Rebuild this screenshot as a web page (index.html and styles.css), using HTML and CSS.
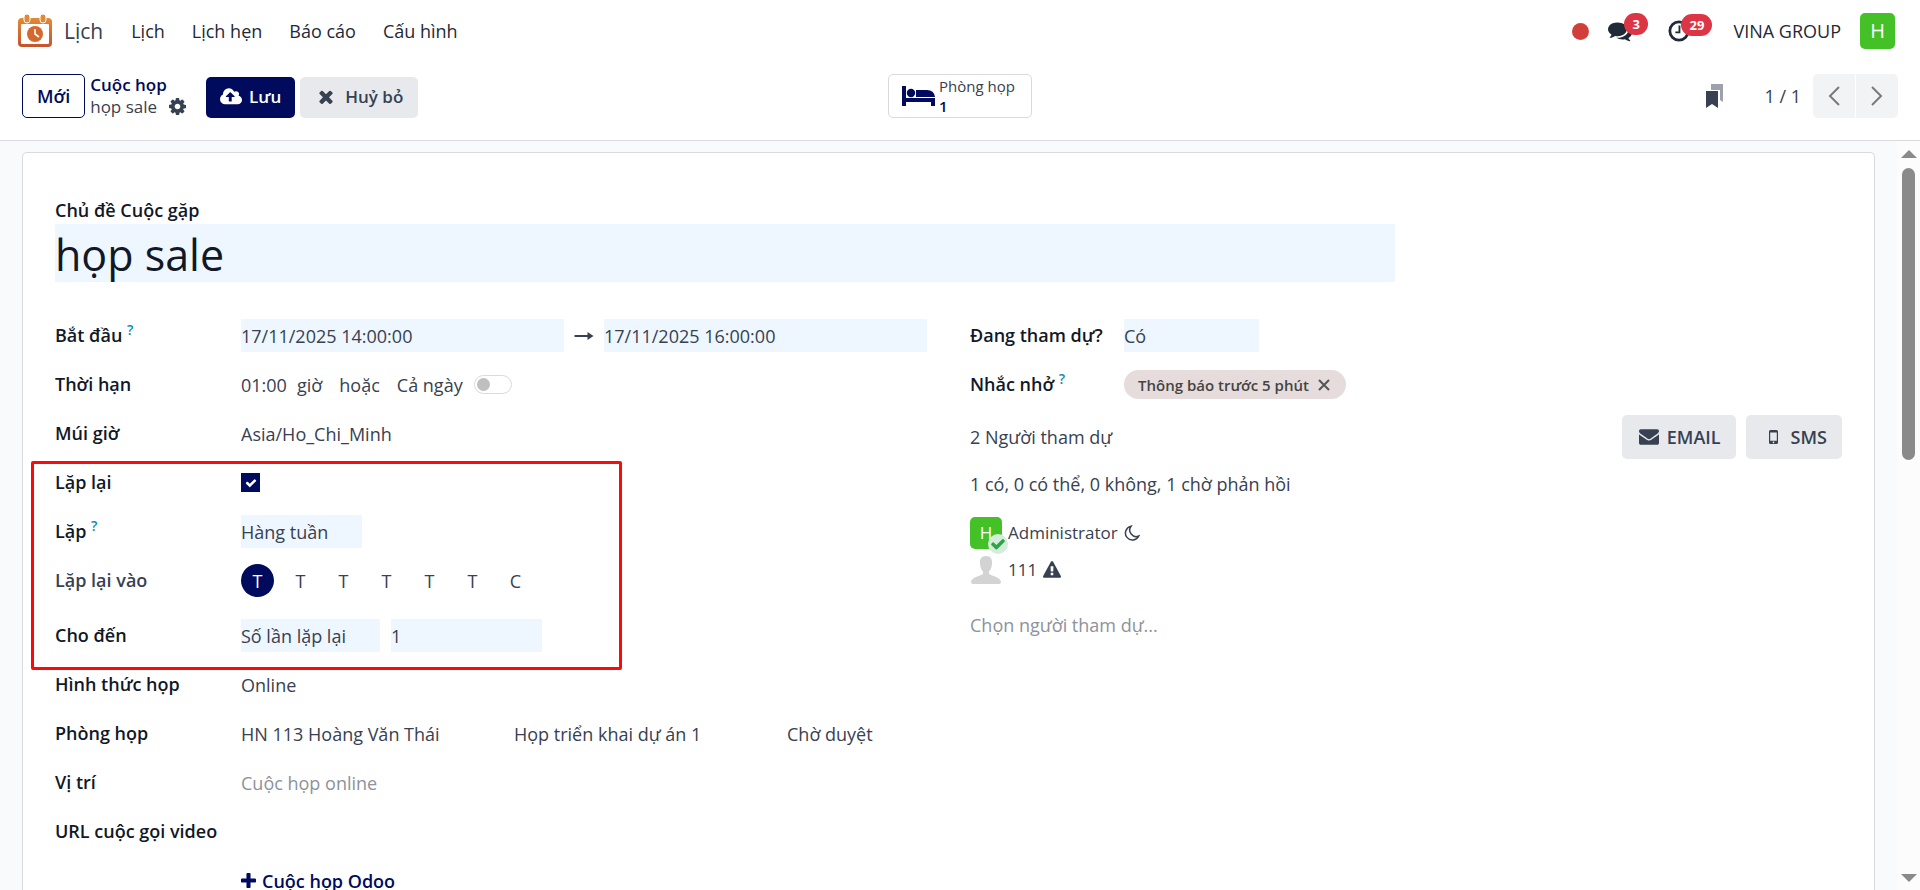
FILE: index.html
```
<!DOCTYPE html>
<html lang="vi">
<head>
  <meta charset="UTF-8">
  <title>Lịch - họp sale</title>
  <link rel="stylesheet" href="styles.css">
</head>

<body>

  <header class="navbar">
    <a href="#" class="brand">
      <svg class="brand-logo" viewBox="0 0 34 34">
        <defs>
          <linearGradient id="logo-fill" x1="0" y1="0" x2="0" y2="1">
            <stop offset="0" stop-color="#e08a35"/>
            <stop offset="1" stop-color="#c4532e"/>
          </linearGradient>
        </defs>
        <rect x="0" y="4" width="34" height="29" rx="4" fill="url(#logo-fill)"/>
        <rect x="3" y="10" width="28" height="20" rx="1" fill="#fff"/>
        <rect x="6" y="0" width="6" height="9" rx="3" fill="#e08a35" stroke="#fff"/>
        <rect x="22" y="0" width="6" height="9" rx="3" fill="#e08a35" stroke="#fff"/>
        <circle cx="17" cy="20" r="8" fill="#d4682f"/>
        <path d="M17 15v5l4 3" fill="none" stroke="#fff" stroke-width="1.6"/>
      </svg>
      <span>Lịch</span>
    </a>
    <nav class="menu">
      <a href="#">Lịch</a>
      <a href="#">Lịch hẹn</a>
      <a href="#">Báo cáo</a>
      <a href="#">Cấu hình</a>
    </nav>
    <div class="systray">
      <span class="status-dot"></span>
      <button class="tray-btn tray-chat" aria-label="Tin nhắn">
        <svg viewBox="0 0 1792 1792"><path d="M1408 768q0 139-94 257t-256.500 186.500-353.500 68.500q-86 0-176-16-124 88-278 128-36 9-86 16h-3q-11 0-20.500-8t-11.500-21q-1-3-1-6.500t.5-6.500 2-6l2.500-5 3.500-5.500 4-5 4.500-5 4-4.500q5-6 23-25t26-29.500 22.500-29 25-38.500 20.500-44q-124-72-195-177t-71-224q0-139 94-257t256.500-186.500 353.500-68.500 353.500 68.500 256.500 186.500 94 257zm384 256q0 120-71 224.500t-195 176.500q10 24 20.500 44t25 38.500 22.500 29 26 29.500 23 25q1 1 4 4.500t4.500 5 4 5 3.500 5.500l2.500 5 2 6 .5 6.500-1 6.500q-3 14-13 22t-22 7q-50-7-86-16-154-40-278-128-90 16-176 16-271 0-472-132 58 4 88 4 161 0 309-45t264-129q125-92 192-212t67-254q0-77-23-152 129 71 204 178t75 230z"/></svg>
        <span class="badge">3</span>
      </button>
      <button class="tray-btn tray-clock" aria-label="Hoạt động">
        <svg viewBox="0 0 24 24"><circle cx="12" cy="12" r="10" fill="none" stroke="currentColor" stroke-width="3"/><path d="M12.500 6v7.500H8" fill="none" stroke="currentColor" stroke-width="2"/></svg>
        <span class="badge">29</span>
      </button>
      <span class="company">VINA GROUP</span>
      <button class="user-avatar">H</button>
    </div>
  </header>

  <div class="control-panel">
    <div class="cp-left">
      <button class="btn btn-outline">Mới</button>
      <div class="breadcrumb">
        <a href="#">Cuộc họp</a>
        <div class="breadcrumb-current">
          <span>họp sale</span>
          <svg class="icon-gear" viewBox="128 128 1536 1536"><path d="M1152 896q0-106-75-181t-181-75-181 75-75 181 75 181 181 75 181-75 75-181zm512-109v222q0 12-8 23t-20 13l-185 28q-19 54-39 91 35 50 107 138 10 12 10 25t-9 23q-27 37-99 108t-94 71q-12 0-26-9l-138-108q-44 23-91 38-16 136-29 186-7 28-36 28h-222q-14 0-24.500-8.500t-11.500-21.500l-28-184q-49-16-90-37l-141 107q-10 9-25 9-14 0-25-11-126-114-165-168-7-10-7-23 0-12 8-23 15-21 51-66.500t54-70.500q-27-50-41-99l-183-27q-13-2-21-12.500t-8-23.500v-222q0-12 8-23t19-13l186-28q14-46 39-92-40-57-107-138-10-12-10-24 0-10 9-23 26-36 98.500-107.500t94.500-71.500q13 0 26 10l138 107q44-23 91-38 16-136 29-186 7-28 36-28h222q14 0 24.500 8.500t11.500 21.500l28 184q49 16 90 37l142-107q9-9 24-9 13 0 25 10 129 119 165 170 7 8 7 22 0 12-8 23-15 21-51 66.500t-54 70.500q26 50 41 98l183 28q13 2 21 12.500t8 23.500z"/></svg>
        </div>
      </div>
      <div class="form-actions">
        <button class="btn btn-primary">
          <svg class="icon-cloud" viewBox="-64 128 1920 1536"><path d="M1216 864q0-14-9-23l-352-352q-9-9-23-9t-23 9l-351 351q-10 12-10 24 0 14 9 23t23 9h224v352q0 13 9.500 22.500t22.500 9.500h192q13 0 22.500-9.500t9.500-22.500v-352h224q13 0 22.500-9.500t9.500-22.500zm640 288q0 159-112.500 271.500t-271.500 112.500h-1088q-185 0-316.500-131.500t-131.500-316.500q0-130 70-240t188-165q-2-30-2-43 0-212 150-362t362-150q156 0 285.500 87t188.500 231q71-62 166-62 106 0 181 75t75 181q0 76-41 138 130 31 213.500 135.500t83.500 238.500z"/></svg>
          Lưu
        </button>
        <button class="btn btn-light btn-discard">
          <svg class="icon-times" viewBox="302 302 1188 1252"><path d="M1490 1322q0 40-28 68l-136 136q-28 28-68 28t-68-28l-294-294-294 294q-28 28-68 28t-68-28l-136-136q-28-28-28-68t28-68l294-294-294-294q-28-28-28-68t28-68l136-136q28-28 68-28t68 28l294 294 294-294q28-28 68-28t68 28l136 136q28 28 28 68t-28 68l-294 294 294 294q28 28 28 68z"/></svg>
          Huỷ bỏ
        </button>
      </div>
    </div>

    <button class="stat-button">
      <svg class="icon-bed" viewBox="0 0 33 20"><path d="M0 0h4v12h29v8h-4v-4H4v4H0z"/><circle cx="9" cy="7" r="4.200"/><path d="M14 4h11q7 0 8 7H14z"/></svg>
      <span class="stat-text">
        <span>Phòng họp</span>
        <strong>1</strong>
      </span>
    </button>

    <div class="cp-right">
      <svg class="icon-bookmark" viewBox="0 0 18 24"><path d="M5 0h12v18l-3-2V6H5z" fill="#9ca1ac"/><path d="M0 7h12v17l-6-4-6 4z"/></svg>
      <span class="pager-count">1 / 1</span>
      <div class="pager">
        <button aria-label="Trước"><svg viewBox="0 0 12 20"><path d="M11 1L2 10l9 9"/></svg></button>
        <button aria-label="Sau"><svg viewBox="0 0 12 20"><path d="M1 1l9 9-9 9"/></svg></button>
      </div>
    </div>
  </div>

  <div class="content">
    <main class="sheet">
      <label class="title-label" for="subject">Chủ đề Cuộc gặp</label>
      <input class="title-input" id="subject" type="text" value="họp sale">

      <div class="columns">
        <div class="col">
          <div class="row">
            <label for="start">Bắt đầu <sup>?</sup></label>
            <div class="date-range">
              <input class="field" id="start" type="text" value="17/11/2025 14:00:00">
              <svg class="icon-arrow" viewBox="0 0 19 10"><path d="M0 4h13V1l6 4-6 4V6H0z"/></svg>
              <input class="field" type="text" value="17/11/2025 16:00:00" aria-label="Kết thúc">
            </div>
          </div>
          <div class="row">
            <label for="duration">Thời hạn</label>
            <div class="duration">
              <input class="plain" id="duration" type="text" value="01:00">
              <span class="unit">giờ</span>
              <span class="or">hoặc</span>
              <label for="allday">Cả ngày</label>
              <input class="switch" id="allday" type="checkbox">
            </div>
          </div>
          <div class="row">
            <label for="timezone">Múi giờ</label>
            <input class="plain" id="timezone" type="text" value="Asia/Ho_Chi_Minh">
          </div>

          <div class="recurrence">
            <div class="row">
              <label for="recurring">Lặp lại</label>
              <span class="tick-box">
                <input id="recurring" type="checkbox" checked>
                <svg viewBox="0 0 1792 1792"><path d="M1671 566q0 40-28 68l-724 724-136 136q-28 28-68 28t-68-28l-136-136-362-362q-28-28-28-68t28-68l136-136q28-28 68-28t68 28l294 295 656-657q28-28 68-28t68 28l136 136q28 28 28 68z"/></svg>
              </span>
            </div>
            <div class="row">
              <label for="repeat">Lặp <sup>?</sup></label>
              <select class="field field-repeat" id="repeat"><option>Hàng tuần</option></select>
            </div>
            <div class="row row-days">
              <span class="row-name">Lặp lại vào</span>
              <div class="days">
                <button class="active">T</button>
                <button>T</button>
                <button>T</button>
                <button>T</button>
                <button>T</button>
                <button>T</button>
                <button>C</button>
              </div>
            </div>
            <div class="row">
              <label for="until">Cho đến</label>
              <div class="until">
                <select class="field field-until" id="until"><option>Số lần lặp lại</option></select>
                <input class="field field-count" type="text" value="1" aria-label="Số lần">
              </div>
            </div>
          </div>

          <div class="row">
            <label for="meeting-type">Hình thức họp</label>
            <select class="plain" id="meeting-type"><option>Online</option></select>
          </div>
          <div class="row">
            <span class="row-name strong">Phòng họp</span>
            <div class="room">
              <span>HN 113 Hoàng Văn Thái</span>
              <span>Họp triển khai dự án 1</span>
              <span>Chờ duyệt</span>
            </div>
          </div>
          <div class="row">
            <label for="location">Vị trí</label>
            <input class="plain" id="location" type="text" placeholder="Cuộc họp online">
          </div>
          <div class="row">
            <label for="video-url">URL cuộc gọi video</label>
            <input class="plain" id="video-url" type="text">
          </div>
          <div class="row">
            <span></span>
            <a href="#" class="odoo-link">
              <svg viewBox="192 128 1408 1408"><path d="M1600 736v192q0 40-28 68t-68 28h-416v416q0 40-28 68t-68 28h-192q-40 0-68-28t-28-68v-416h-416q-40 0-68-28t-28-68v-192q0-40 28-68t68-28h416v-416q0-40 28-68t68-28h192q40 0 68 28t28 68v416h416q40 0 68 28t28 68z"/></svg>
              Cuộc họp Odoo
            </a>
          </div>
        </div>

        <div class="col col-right">
          <div class="row">
            <label for="attending">Đang tham dự?</label>
            <select class="field field-attending" id="attending"><option>Có</option></select>
          </div>
          <div class="row">
            <span class="row-name strong">Nhắc nhở <sup>?</sup></span>
            <span class="tag">
              Thông báo trước 5 phút
              <button aria-label="Xoá"><svg viewBox="0 0 12 12"><path d="M1 1l10 10M11 1L1 11"/></svg></button>
            </span>
          </div>
          <div class="attendee-bar">
            <span>2 Người tham dự</span>
            <div class="attendee-actions">
              <button class="btn btn-light">
                <svg class="icon-mail" viewBox="0 256 1792 1408"><path d="M1792 710v794q0 66-47 113t-113 47h-1472q-66 0-113-47t-47-113v-794q44 49 101 87 362 246 497 345 57 42 92.500 65.500t94.500 48 110 24.500h2q51 0 110-24.500t94.500-48 92.500-65.500q170-123 498-345 57-39 100-87zm0-294q0 79-49 151t-122 123q-376 261-468 325-10 7-42.500 31t-54 38-52 31.500-57.500 27-50 9h-2q-23 0-50-9t-57.500-27-52-31.500-54-38-42.500-31q-91-64-262-182.500t-205-142.500q-62-42-117-115.500t-55-136.500q0-78 41.500-130t118.500-52h1472q65 0 112.500 47t47.500 113z"/></svg>
                EMAIL
              </button>
              <button class="btn btn-light btn-sms">
                <svg class="icon-phone" viewBox="0 0 9 14"><path fill-rule="evenodd" d="M1.500 0h6Q9 0 9 1.500v11Q9 14 7.500 14h-6Q0 14 0 12.500v-11Q0 0 1.500 0zM1.200 2.500v8.300h6.600V2.500zM4.500 11.600a.8.8 0 1 0 .01 0z"/></svg>
                SMS
              </button>
            </div>
          </div>
          <p class="summary">1 có, 0 có thể, 0 không, 1 chờ phản hồi</p>
          <ul class="attendees">
            <li>
              <span class="avatar">H
                <span class="accepted"><svg viewBox="0 0 1792 1792"><path d="M1671 566q0 40-28 68l-724 724-136 136q-28 28-68 28t-68-28l-136-136-362-362q-28-28-28-68t28-68l136-136q28-28 68-28t68 28l294 295 656-657q28-28 68-28t68 28l136 136q28 28 28 68z"/></svg></span>
              </span>
              <span>Administrator</span>
              <svg class="icon-moon" viewBox="0 0 16 16"><path d="M7 1.200A7 7 0 1 0 14.800 11 6.500 6.500 0 0 1 7 1.200z"/></svg>
            </li>
            <li>
              <svg class="avatar-empty" viewBox="0 0 32 28"><path d="M16 0c5 0 6.500 3.500 6 8-.3 3.500-1.500 6-3 7.500V18c3 2 12 3.500 12 8q0 2-2 2H3q-2 0-2-2c0-4.500 9-6 12-8v-2.500c-1.500-1.500-2.700-4-3-7.500-.5-4.500 1-8 6-8z"/></svg>
              <span>111</span>
              <svg class="icon-warning" viewBox="0 0 1792 1664"><path d="M1024 1375v-190q0-14-9.500-23.500t-22.500-9.500h-192q-13 0-22.500 9.500t-9.500 23.500v190q0 14 9.500 23.500t22.500 9.500h192q13 0 22.500-9.500t9.500-23.500zm-2-374l18-459q0-12-10-19-13-11-24-11h-220q-11 0-24 11-10 7-10 21l17 457q0 10 10 16.500t24 6.500h185q14 0 23.500-6.500t10.500-16.500zm-14-934l768 1408q35 63-2 126-17 29-46.500 46t-63.500 17h-1536q-34 0-63.500-17t-46.500-46q-37-63-2-126l768-1408q17-31 47-49t65-18 65 18 47 49z"/></svg>
            </li>
          </ul>
          <input class="plain attendee-search" type="text" placeholder="Chọn người tham dự..." aria-label="Chọn người tham dự">
        </div>
      </div>
    </main>

    <div class="scrollbar">
      <svg viewBox="0 0 16 8"><path d="M8 0l8 8H0z"/></svg>
      <div class="track"><div class="thumb"></div></div>
      <svg viewBox="0 0 16 8"><path d="M0 0h16L8 8z"/></svg>
    </div>
  </div>

</body>
</html>
```
FILE: styles.css
```
*, *::before, *::after {
  box-sizing: border-box;
}

body {
  margin: 0;
  height: 100vh;
  display: flex;
  flex-direction: column;
  overflow: hidden;
  font-family: "Open Sans", "Noto Sans", sans-serif;
  font-size: 18px;
  line-height: 24px;
  color: #374151;
  background-color: #fff;
}

a {
  color: inherit;
  text-decoration: none;
}

button, input, select {
  font: inherit;
  color: inherit;
  margin: 0;
  padding: 0;
  border: none;
  border-radius: 0;
  background: none;
  appearance: none;
}

button {
  cursor: pointer;
}

svg {
  display: block;
  flex: none;
  fill: currentColor;
}

/* navbar */
.navbar {
  display: flex;
  align-items: center;
  height: 62px;
  padding: 0 25px 0 18px;
  color: #1f2937;
}

.brand {
  display: flex;
  align-items: center;
  gap: 12px;
  font-size: 21px;
  color: #374151;
}

.brand-logo {
  width: 34px;
  height: 34px;
}

.menu {
  display: flex;
  gap: 27px;
  margin-left: 28px;
}

.systray {
  display: flex;
  align-items: center;
  margin-left: auto;
}

.status-dot {
  width: 17px;
  height: 17px;
  margin-right: 19px;
  border-radius: 50%;
  background-color: #d23f3a;
}

.tray-btn {
  position: relative;
}

.tray-btn svg {
  width: 24px;
  height: 24px;
}

.tray-clock svg {
  width: 22px;
  height: 22px;
}

.tray-chat {
  margin-right: 36px;
}

.tray-clock {
  margin-right: 43px;
}

.badge {
  position: absolute;
  left: 16px;
  top: -6px;
  height: 22px;
  padding: 0 8px;
  border-radius: 11px;
  font-size: 13px;
  font-weight: 700;
  line-height: 22px;
  color: #fff;
  background-color: #dc3545;
}

.tray-clock .badge {
  left: 13px;
}

.company {
  margin-right: 19px;
}

.user-avatar {
  width: 35px;
  height: 36px;
  border-radius: 5px;
  font-size: 20px;
  color: #fff;
  background-color: #43c127;
}

/* control panel */
.control-panel {
  display: grid;
  grid-template-columns: 1fr auto 1fr;
  align-items: center;
  height: 79px;
  padding: 0 22px 11px;
  border-bottom: 1px solid #d8dadd;
}

.cp-left, .cp-right, .form-actions, .breadcrumb-current {
  display: flex;
  align-items: center;
}

.btn {
  display: flex;
  align-items: center;
  justify-content: center;
  height: 44px;
  padding: 0 14px;
  border-radius: 5px;
  font-weight: 600;
}

.btn-outline {
  border: 1px solid #000b5e;
  color: #000b5e;
}

.breadcrumb {
  margin: 0 20px 0 5px;
  font-size: 17px;
  line-height: 22px;
}

.breadcrumb a {
  font-weight: 600;
  color: #000b5e;
}

.breadcrumb-current {
  gap: 12px;
}

.icon-gear {
  width: 17px;
  height: 17px;
}

.form-actions {
  gap: 5px;
  padding-top: 3px;
}

.form-actions .btn {
  height: 41px;
  font-size: 17px;
}

.btn-primary {
  gap: 7px;
  color: #fff;
  background-color: #000b5e;
}

.btn-light {
  gap: 8px;
  background-color: #e7e9ed;
}

.form-actions .btn-discard {
  gap: 12px;
  padding: 0 15px 0 19px;
}

.icon-cloud {
  width: 22px;
  height: 18px;
}

.icon-times {
  width: 14px;
  height: 14px;
}

.stat-button {
  display: flex;
  align-items: center;
  gap: 4px;
  height: 44px;
  padding: 0 16px 0 13px;
  border: 1px solid #d8dadd;
  border-radius: 5px;
  font-size: 15px;
  line-height: 20px;
}

.icon-bed {
  width: 33px;
  height: 20px;
  color: #000b5e;
}

.stat-text {
  display: flex;
  flex-direction: column;
  align-items: flex-start;
}

.stat-text strong {
  font-weight: 600;
  color: #000b5e;
}

.cp-right {
  justify-content: flex-end;
}

.icon-bookmark {
  width: 18px;
  height: 24px;
  margin-right: 40px;
}

.pager-count {
  margin-right: 12px;
}

.pager {
  display: flex;
  gap: 1px;
}

.pager button {
  display: flex;
  align-items: center;
  justify-content: center;
  width: 42px;
  height: 44px;
  border-radius: 5px 0 0 5px;
  background-color: #f2f3f5;
}

.pager button:last-child {
  border-radius: 0 5px 5px 0;
}

.pager svg {
  width: 12px;
  height: 20px;
  fill: none;
  stroke: #7a7a7a;
  stroke-width: 2;
}

/* form sheet */
.content {
  display: flex;
  flex: 1;
  min-height: 0;
  overflow: hidden;
  background-color: #f8fafc;
}

.sheet {
  flex: 1;
  margin: 11px 22px 0;
  padding: 45px 32px 0;
  border: 1px solid #d8dadd;
  border-bottom: none;
  border-radius: 5px 5px 0 0;
  background-color: #fff;
}

label, .strong {
  font-weight: 600;
  color: #111827;
}

sup {
  font-size: 14px;
  font-weight: 600;
  line-height: 0;
  color: #0d8bb0;
}

.title-label {
  display: block;
  margin-bottom: 2px;
}

.title-input {
  display: block;
  width: 75%;
  height: 58px;
  padding-top: 3px;
  font-size: 43px;
  color: #111827;
  background-color: #eef7ff;
}

.columns {
  display: grid;
  grid-template-columns: 1fr 1fr;
  gap: 43px;
  margin-top: 37px;
}

.col, .recurrence {
  display: flex;
  flex-direction: column;
  gap: 16px;
}

.row {
  display: grid;
  grid-template-columns: 186px 1fr;
  align-items: center;
  height: 33px;
}

.row > label, .row-name {
  padding-bottom: 2px;
}

.row-name {
  font-weight: 600;
}

.field {
  width: 100%;
  height: 33px;
  background-color: #eef7ff;
}

.plain {
  width: 100%;
  height: 33px;
}

::placeholder {
  color: #8d929c;
  opacity: 1;
}

.date-range {
  display: flex;
  align-items: center;
  gap: 10px;
}

.date-range .field {
  flex: 1;
  min-width: 0;
}

.icon-arrow {
  width: 20px;
  height: 10px;
}

.duration {
  display: flex;
  align-items: center;
}

.duration .plain {
  width: 56px;
}

.duration .or {
  margin: 0 17px;
}

.duration label {
  font-weight: 400;
  color: inherit;
}

.switch {
  display: flex;
  align-items: center;
  width: 38px;
  height: 19px;
  margin-left: 11px;
  padding-left: 2px;
  border: 1px solid #d8dadd;
  border-radius: 10px;
}

.switch::before {
  content: "";
  width: 13px;
  height: 13px;
  border-radius: 50%;
  background-color: #bfbfbf;
}

/* highlighted recurrence block */
.recurrence {
  position: relative;
}

.recurrence::after {
  content: "";
  position: absolute;
  top: -5px;
  bottom: -18px;
  left: -24px;
  width: 591px;
  border: 3px solid #ff0808;
  border-radius: 2px;
  pointer-events: none;
}

.tick-box {
  display: grid;
  place-items: center;
  width: 19px;
  height: 19px;
  color: #fff;
}

.tick-box input, .tick-box svg {
  grid-area: 1 / 1;
}

.tick-box input {
  width: 19px;
  height: 19px;
  background-color: #000b5e;
}

.tick-box svg {
  width: 12px;
  height: 12px;
  z-index: 1;
  pointer-events: none;
}

.field-repeat {
  width: 121px;
}

.row-days {
  height: 39px;
  align-items: start;
}

.row-days .row-name {
  padding-top: 4px;
}

.days {
  display: flex;
  gap: 10px;
}

.days button {
  width: 33px;
  height: 33px;
  border-radius: 50%;
}

.days .active {
  color: #fff;
  background-color: #000b5e;
}

.until {
  display: flex;
  gap: 11px;
}

.field-until {
  width: 139px;
}

.field-count {
  width: 151px;
}

.room {
  display: grid;
  grid-template-columns: 273px 273px 1fr;
}

.odoo-link {
  display: flex;
  align-items: center;
  gap: 6px;
  font-weight: 600;
  color: #000b5e;
}

.odoo-link svg {
  width: 15px;
  height: 15px;
}

/* attendees */
.col-right .row {
  grid-template-columns: 154px 1fr;
}

.field-attending {
  width: 135px;
}

.tag {
  display: flex;
  align-items: center;
  justify-self: start;
  gap: 9px;
  height: 29px;
  padding: 0 16px 0 14px;
  border-radius: 15px;
  font-size: 15px;
  font-weight: 600;
  color: #444;
  background-color: #e6dcdc;
}

.tag svg {
  width: 12px;
  height: 12px;
  stroke: #555;
  stroke-width: 2;
}

.attendee-bar {
  display: flex;
  align-items: center;
  justify-content: space-between;
  height: 44px;
  margin-top: -2px;
}

.attendee-actions {
  display: flex;
  gap: 10px;
}

.attendee-actions .btn {
  padding: 0 15px 0 17px;
}

.attendee-actions .btn-sms {
  gap: 13px;
  padding-left: 23px;
}

.icon-mail {
  width: 20px;
  height: 16px;
}

.icon-phone {
  width: 9px;
  height: 14px;
}

.summary {
  margin: -3px 0 0;
}

.attendees {
  margin: 2px 0 0;
  padding: 0;
  list-style: none;
}

.attendees li {
  display: flex;
  align-items: center;
  gap: 6px;
  height: 37px;
  font-size: 17px;
}

.avatar {
  position: relative;
  width: 32px;
  height: 32px;
  border-radius: 5px;
  line-height: 32px;
  text-align: center;
  color: #fff;
  background-color: #43c127;
}

.accepted {
  position: absolute;
  left: 18px;
  top: 17px;
  padding: 2px;
  border-radius: 50%;
  color: #28a745;
  background-color: #d4edda;
}

.accepted svg {
  width: 16px;
  height: 16px;
}

.avatar-empty {
  width: 32px;
  height: 28px;
  color: #d3d3d3;
}

.icon-moon {
  width: 16px;
  height: 16px;
  fill: none;
  stroke: currentColor;
  stroke-width: 1.5;
}

.icon-warning {
  width: 18px;
  height: 17px;
}

.attendee-search {
  margin-top: 4px;
}

/* scrollbar */
.scrollbar {
  display: flex;
  flex-direction: column;
  align-items: center;
  gap: 10px;
  width: 23px;
  padding: 9px 0 8px;
  background-color: #fcfcfc;
}

.scrollbar svg {
  width: 16px;
  height: 8px;
  color: #8a8a8a;
}

.track {
  flex: 1;
}

.thumb {
  width: 13px;
  height: 42%;
  border-radius: 7px;
  background-color: #8a8a8a;
}
```
